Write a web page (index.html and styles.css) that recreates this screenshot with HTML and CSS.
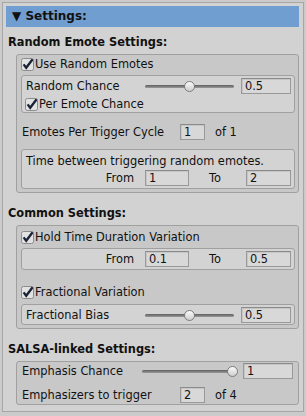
FILE: index.html
```html
<!DOCTYPE html>
<html lang="en">
<head>
  <meta charset="UTF-8" />
  <title>Settings</title>
  <link rel="stylesheet" href="styles.css">
</head>
<body>

<div class="panel">
  <div class="header">▼ Settings:</div>

  <!-- random emotes -->
  <div class="heading">Random Emote Settings:</div>
  <div class="group group-random">
    <div class="check-row">
      <svg class="check" width="13" height="13" viewBox="0 0 13 13"><rect x="0.5" y="0.5" width="12" height="12" rx="2" fill="#e2e2e2" stroke="#8c8c8c"/><path d="M2.6 6.4 L5.2 9.8 L11.6 1.2" fill="none" stroke="#1a2236" stroke-width="2.3"/></svg>
      <span>Use Random Emotes</span>
    </div>
    <div class="box box-chance">
      <div class="row slider-row">
        <span class="label">Random Chance</span>
        <div class="slider" style="--v: 0.5"><div class="track"></div><div class="thumb"></div></div>
        <input class="field field-wide" type="text" value="0.5" />
      </div>
      <div class="check-row check-row-inner">
        <svg class="check" width="13" height="13" viewBox="0 0 13 13"><rect x="0.5" y="0.5" width="12" height="12" rx="2" fill="#e2e2e2" stroke="#8c8c8c"/><path d="M2.6 6.4 L5.2 9.8 L11.6 1.2" fill="none" stroke="#1a2236" stroke-width="2.3"/></svg>
        <span>Per Emote Chance</span>
      </div>
    </div>
    <div class="row count-row">
      <span class="label-long">Emotes Per Trigger Cycle</span>
      <input class="field field-small" type="text" value="1" />
      <span class="of">of 1</span>
    </div>
    <div class="box box-time">
      <div class="row text-row">Time between triggering random emotes.</div>
      <div class="row range-row">
        <span class="from">From</span>
        <input class="field field-from" type="text" value="1" />
        <span class="to">To</span>
        <input class="field field-to" type="text" value="2" />
      </div>
    </div>
  </div>

  <!-- common -->
  <div class="heading">Common Settings:</div>
  <div class="group group-common">
    <div class="check-row">
      <svg class="check" width="13" height="13" viewBox="0 0 13 13"><rect x="0.5" y="0.5" width="12" height="12" rx="2" fill="#e2e2e2" stroke="#8c8c8c"/><path d="M2.6 6.4 L5.2 9.8 L11.6 1.2" fill="none" stroke="#1a2236" stroke-width="2.3"/></svg>
      <span>Hold Time Duration Variation</span>
    </div>
    <div class="box box-hold">
      <div class="row range-row">
        <span class="from">From</span>
        <input class="field field-from" type="text" value="0.1" />
        <span class="to">To</span>
        <input class="field field-to" type="text" value="0.5" />
      </div>
    </div>
    <div class="check-row check-row-frac">
      <svg class="check" width="13" height="13" viewBox="0 0 13 13"><rect x="0.5" y="0.5" width="12" height="12" rx="2" fill="#e2e2e2" stroke="#8c8c8c"/><path d="M2.6 6.4 L5.2 9.8 L11.6 1.2" fill="none" stroke="#1a2236" stroke-width="2.3"/></svg>
      <span>Fractional Variation</span>
    </div>
    <div class="box box-bias">
      <div class="row slider-row">
        <span class="label">Fractional Bias</span>
        <div class="slider" style="--v: 0.5"><div class="track"></div><div class="thumb"></div></div>
        <input class="field field-wide" type="text" value="0.5" />
      </div>
    </div>
  </div>

  <!-- salsa -->
  <div class="heading">SALSA-linked Settings:</div>
  <div class="group group-salsa">
    <div class="row slider-row">
      <span class="label label-salsa">Emphasis Chance</span>
      <div class="slider" style="--v: 1"><div class="track"></div><div class="thumb"></div></div>
      <input class="field field-wide" type="text" value="1" />
    </div>
    <div class="row count-row count-row-salsa">
      <span class="label-long">Emphasizers to trigger</span>
      <input class="field field-small" type="text" value="2" />
      <span class="of">of 4</span>
    </div>
  </div>
</div>

</body>
</html>
```

FILE: styles.css
```css
body {
  margin: 0;
  background: #cbcbcb;
  font-family: "DejaVu Sans", Verdana, sans-serif;
  font-size: 11.4px;
  color: #111;
}

.panel {
  margin: 2px;
  border: 1px solid #a6a6a6;
  background: #d2d2d2;
  padding: 3px 4px 1px 3px;
  display: flex;
  flex-direction: column;
}

.header {
  height: 21px;
  line-height: 21px;
  background: #709ed0;
  padding-left: 6px;
  font-size: 12px;
  font-weight: bold;
}

.heading {
  margin-top: 6px;
  height: 18px;
  line-height: 18px;
  padding-left: 2px;
  font-weight: bold;
}

.group {
  margin: 3px 0 5px 10px;
  border: 1px solid #a0a0a0;
  border-radius: 3px;
  background: #c8c8c8;
  padding: 1px 3px 3px 4px;
  display: flex;
  flex-direction: column;
}

.group-common { padding-top: 3px; }
.group-salsa { padding: 1px 2px 1px 0; }

.box {
  border: 1px solid #a0a0a0;
  border-radius: 3px;
  background: #d3d3d3;
  display: flex;
  flex-direction: column;
}

.box-chance { margin-top: 3px; padding-top: 2px; }
.box-time { margin-top: 9px; padding: 3px 0 2px; }
.box-hold { margin-top: 3px; padding: 2px 0 2px; }
.box-bias { margin-top: 4px; padding: 2px 0 1px; }

.row {
  display: flex;
  align-items: center;
  height: 16px;
}

.check-row {
  display: flex;
  align-items: center;
  height: 16px;
  gap: 1px;
}

.check { flex: none; }

.check-row-inner {
  margin-top: 2px;
  padding-left: 3px;
}

.check-row-frac { margin-top: 14px; }

/* slider rows */
.slider-row { padding: 0 3px 0 4px; }

.label { width: 117px; flex: none; }
.label-salsa { width: 118px; }
.group-salsa .slider-row { padding-left: 5px; margin-top: 0; }

.slider {
  flex: 1;
  position: relative;
  height: 16px;
}

.track {
  position: absolute;
  left: 2px;
  right: 2px;
  top: 7px;
  height: 3px;
  border-radius: 2px;
  background: linear-gradient(#5e5e5e, #9a9a9a);
}

.thumb {
  position: absolute;
  top: 3px;
  left: calc((100% - 11px) * var(--v));
  width: 9px;
  height: 9px;
  border: 1px solid #7c7c7c;
  border-radius: 50%;
  background: linear-gradient(#fbfbfb, #cdcdcd);
}

/* fields */
.field {
  box-sizing: border-box;
  height: 16px;
  margin: 0;
  padding: 0 3px;
  border: 1px solid #999;
  border-top-color: #8a8a8a;
  background: #d8d8d8;
  box-shadow: inset 1px 1px 0 #c6c6c6;
  font-family: inherit;
  font-size: inherit;
  color: #111;
  outline: none;
  flex: none;
}

.field-wide { width: 50px; margin-left: 5px; }
.field-small { width: 25px; }
.field-from { width: 44px; }
.field-to { width: 45px; }

/* count rows */
.count-row { margin-top: 11px; padding-left: 1px; }
.count-row-salsa { margin-top: 8px; padding-left: 5px; }
.label-long { width: 158px; flex: none; }
.of { margin-left: 10px; }

/* from / to */
.text-row { padding-left: 4px; }

.range-row {
  justify-content: flex-end;
  padding-right: 3px;
}

.box-time .range-row { margin-top: 1px; }

.from { margin-right: 11px; }
.to { margin: 0 25px 0 20px; }
```
